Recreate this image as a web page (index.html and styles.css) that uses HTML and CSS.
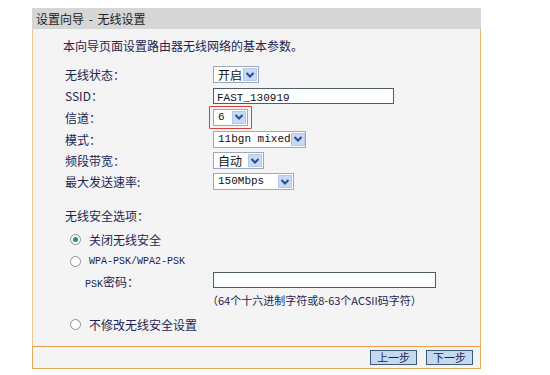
FILE: index.html
```html
<!DOCTYPE html>
<html lang="zh-CN">
<head>
    <meta charset="UTF-8">
    <meta name="viewport" content="width=device-width, initial-scale=1.0">
    <title>设置向导 - 无线设置</title>
    <link rel="stylesheet" href="styles.css">
</head>
<body>
<div class="wizard">
    <div class="title-bar">设置向导 - 无线设置</div>
    <div class="panel">
        <p class="intro">本向导页面设置路由器无线网络的基本参数。</p>
        <div class="form">
            <div class="row">
                <span class="label">无线状态：</span>
                <div class="select w-state"><span class="value">开启</span><span class="arrow"><svg width="10" height="8" viewBox="0 0 10 8"><polyline points="1.5,2 5,5.5 8.5,2" fill="none" stroke="#2b4a94" stroke-width="2"/></svg></span></div>
            </div>
            <div class="row">
                <span class="label latin">SSID：</span>
                <div class="text-input ssid"><span class="mono">FAST_130919</span></div>
            </div>
            <div class="row tall">
                <span class="label">信道：</span>
                <div class="highlight">
                    <div class="select w-channel"><span class="value mono">6</span><span class="arrow"><svg width="10" height="8" viewBox="0 0 10 8"><polyline points="1.5,2 5,5.5 8.5,2" fill="none" stroke="#2b4a94" stroke-width="2"/></svg></span></div>
                </div>
            </div>
            <div class="row tall">
                <span class="label">模式：</span>
                <div class="select w-mode"><span class="value mono">11bgn mixed</span><span class="arrow"><svg width="10" height="8" viewBox="0 0 10 8"><polyline points="1.5,2 5,5.5 8.5,2" fill="none" stroke="#2b4a94" stroke-width="2"/></svg></span></div>
            </div>
            <div class="row">
                <span class="label">频段带宽：</span>
                <div class="select w-band"><span class="value">自动</span><span class="arrow"><svg width="10" height="8" viewBox="0 0 10 8"><polyline points="1.5,2 5,5.5 8.5,2" fill="none" stroke="#2b4a94" stroke-width="2"/></svg></span></div>
            </div>
            <div class="row">
                <span class="label">最大发送速率:</span>
                <div class="select w-rate"><span class="value mono">150Mbps</span><span class="arrow"><svg width="10" height="8" viewBox="0 0 10 8"><polyline points="1.5,2 5,5.5 8.5,2" fill="none" stroke="#2b4a94" stroke-width="2"/></svg></span></div>
            </div>
        </div>

        <p class="section">无线安全选项：</p>
        <div class="security">
            <div class="radio-row">
                <span class="radio checked"></span>
                <span>关闭无线安全</span>
            </div>
            <div class="radio-row">
                <span class="radio"></span>
                <span class="mono small">WPA-PSK/WPA2-PSK</span>
            </div>
            <div class="psk-row">
                <span class="psk-label"><span class="mono small">PSK</span>密码：</span>
                <div class="text-input psk"></div>
            </div>
            <p class="hint">（64个十六进制字符或8-63个ACSII码字符）</p>
            <div class="radio-row last">
                <span class="radio"></span>
                <span>不修改无线安全设置</span>
            </div>
        </div>
    </div>
    <div class="footer">
        <button class="step-btn">上一步</button>
        <button class="step-btn">下一步</button>
    </div>
</div>
</body>
</html>
```

FILE: styles.css
```css
body {
    margin: 0;
    padding: 0;
    background-color: #ffffff;
    font-family: "Noto Sans CJK SC", sans-serif;
    font-size: 12px;
    color: #1d2450;
}
.wizard {
    width: 449px;
    margin: 8px 0 0 32px;
}
.title-bar {
    height: 21px;
    line-height: 21px;
    padding-left: 4px;
    background-color: #d6d6d6;
    color: #222222;
    font-size: 12px;
    word-spacing: 2px;
}
.panel {
    height: 317px;
    box-sizing: border-box;
    padding: 10px 0 0 30px;
    background-color: #f4f4f4;
    border-left: 1px solid #eec48e;
    border-right: 1px solid #eeb46e;
}
.intro {
    margin: 0;
    height: 14px;
    line-height: 14px;
}
.form {
    margin-top: 11px;
    padding-left: 2px;
}
.row {
    display: flex;
    align-items: center;
    height: 21px;
}
.row.tall {
    height: 22px;
}
.label {
    width: 148px;
    flex-shrink: 0;
}
.mono {
    font-family: "Liberation Mono", monospace;
    font-size: 11px;
    white-space: nowrap;
}
.small {
    font-size: 10px;
}
.select {
    display: flex;
    align-items: center;
    justify-content: space-between;
    height: 17px;
    box-sizing: border-box;
    border: 1px solid #9aaabb;
    background-color: #ffffff;
    padding: 0 1px 0 4px;
    color: #111111;
    white-space: nowrap;
}
.select .value {
    line-height: 15px;
}
.arrow {
    display: flex;
    align-items: center;
    justify-content: center;
    flex-shrink: 0;
    width: 14px;
    height: 13px;
    background-color: #c8d9f3;
    border: 1px solid #b4c8e6;
    box-sizing: border-box;
}
.w-state {
    width: 46px;
}
.w-channel {
    width: 35px;
}
.w-mode {
    width: 93px;
}
.w-band {
    width: 51px;
}
.w-rate {
    width: 81px;
}
.highlight {
    margin-left: -4px;
    padding: 2px 3px 2px 3px;
    border: 1px solid #d44040;
    border-radius: 1px;
}
.text-input {
    height: 16px;
    box-sizing: border-box;
    border: 1px solid #4e5e64;
    background-color: #fdfefe;
    padding-left: 3px;
    line-height: 14px;
    color: #111111;
}
.ssid {
    width: 181px;
}
.section {
    margin: 17px 0 0 2px;
    height: 14px;
    line-height: 14px;
}
.security {
    margin-top: 5px;
    padding-left: 7px;
}
.radio-row {
    display: flex;
    align-items: center;
    height: 22px;
    gap: 8px;
}
.radio {
    width: 11px;
    height: 11px;
    box-sizing: border-box;
    border: 1px solid #8b8f96;
    border-radius: 50%;
    background-color: #ffffff;
    display: flex;
    align-items: center;
    justify-content: center;
}
.radio.checked::after {
    content: "";
    width: 5px;
    height: 5px;
    border-radius: 50%;
    background-color: #2e9a46;
}
.psk-row {
    display: flex;
    align-items: center;
    height: 18px;
    padding-left: 15px;
}
.psk-label {
    width: 128px;
    flex-shrink: 0;
}
.psk {
    width: 223px;
    margin-top: -3px;
}
.hint {
    margin: 2px 0 0 137px;
    height: 16px;
    line-height: 16px;
    font-size: 11px;
}
.radio-row.last {
    margin-top: 5px;
}
.footer {
    display: flex;
    justify-content: flex-end;
    align-items: center;
    gap: 9px;
    height: 21px;
    padding-right: 7px;
    background-color: #f4f4f4;
    border: 1px solid #e8a858;
    border-top-color: #e8a050;
}
.step-btn {
    width: 47px;
    height: 15px;
    padding: 0;
    font-family: "Noto Sans CJK SC", sans-serif;
    font-size: 11px;
    line-height: 13px;
    color: #1d2450;
    background-color: #c4d9ee;
    border: 1px solid #3d5b78;
    border-radius: 0;
}
```
